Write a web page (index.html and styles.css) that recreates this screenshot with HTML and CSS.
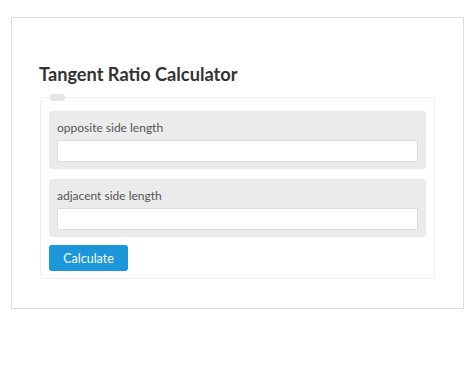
FILE: index.html
```html
<!DOCTYPE html>
<html lang="en">
<head>
    <meta charset="UTF-8">
    <meta name="viewport" content="width=device-width, initial-scale=1.0">
    <title>Tangent Ratio Calculator</title>
    <link rel="stylesheet" href="styles.css">
</head>
<body>
  <div class="card">
    <h2 class="title">Tangent Ratio Calculator</h2>
    <fieldset class="calc">
      <legend class="calc_legend"></legend>
      <div class="field">
        <label class="field_label" for="opp">opposite side length</label>
        <input class="field_input" id="opp" type="text">
      </div>
      <div class="field">
        <label class="field_label" for="adj">adjacent side length</label>
        <input class="field_input" id="adj" type="text">
      </div>
      <button class="btn" type="button">Calculate</button>
    </fieldset>
  </div>
</body>
</html>
```

FILE: styles.css
```css
body{
  margin: 0;
  background-color: #fff;
  font-family: Lato, "Open Sans", sans-serif;
}

.card{
  margin: 17px 11px 0;
  width: 453px;
  height: 292px;
  border: 1px solid #dedede;
  padding: 0 28px 0 27px;
  box-sizing: border-box;
}

.title{
  margin: 43px 0 0 0;
  font-size: 18.2px;
  font-weight: 700;
  color: #333;
  line-height: 26px;
  height: 26px;
}

.calc{
  margin: 7px 0 0 1px;
  border: 1px solid #f0f0f0;
  border-radius: 3px;
  padding: 0 8px 7px;
  width: 395px;
  box-sizing: border-box;
}

.calc_legend{
  width: 15px;
  height: 7px;
  padding: 0;
  margin-left: 1px;
  background-color: #e6e6e6;
  border-radius: 3px;
}

.field{
  display: flex;
  flex-direction: column;
  background-color: #ebebeb;
  border-radius: 3px;
  padding: 8px 8px 7px;
  margin-top: 10px;
}

.field_label{
  font-size: 12px;
  color: #555;
  line-height: 18px;
  margin-bottom: 3px;
}

.field_input{
  height: 22px;
  box-sizing: border-box;
  border: 1px solid #ddd;
  background-color: #fff;
  margin: 0;
}

.btn{
  margin-top: 8px;
  width: 79px;
  height: 26px;
  border: none;
  border-radius: 3px;
  background-color: #1a96d9;
  color: #fff;
  font-family: Lato, "Open Sans", sans-serif;
  font-size: 12.5px;
  padding: 0;
}
```
